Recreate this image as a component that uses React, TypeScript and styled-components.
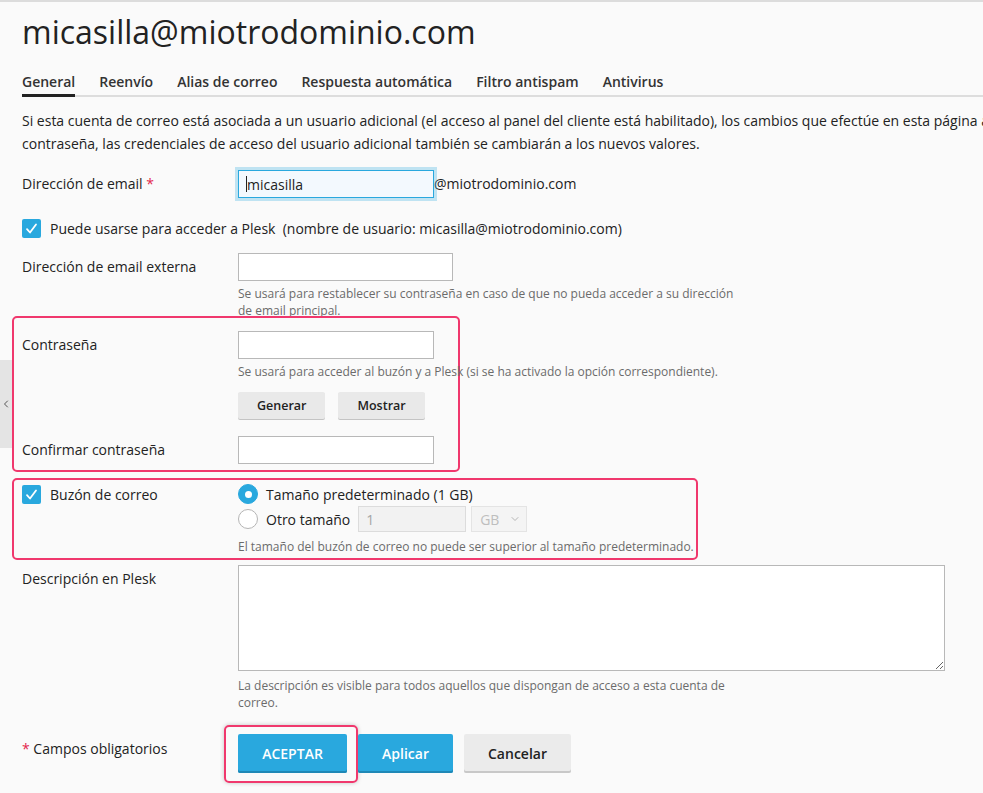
import React from 'react';
import styled, { createGlobalStyle } from 'styled-components';
import { ChevronDown, ChevronLeft } from 'lucide-react';

const GlobalStyle = createGlobalStyle`
  html, body {
    margin: 0;
    padding: 0;
  }
  body {
    background: #fafafa;
    color: #222;
    font-family: 'Open Sans', 'Liberation Sans', sans-serif;
    overflow: hidden;
  }
`;

const ACCENT = '#29a8de';
const MARK = '#f0386d';

const Page = styled.div`
  position: relative;
  min-height: 791px;
  border-top: 2px solid #dcdcdc;
  overflow: hidden;
`;

const Content = styled.div`
  width: 1160px;
  padding-left: 22px;
`;

const Title = styled.h1`
  margin: 10px 0 0;
  font-size: 32px;
  font-weight: 400;
  line-height: 40px;
  color: #222;
`;

const TabList = styled.nav`
  display: flex;
  gap: 24px;
  margin-top: 20px;
  border-bottom: 2px solid #dddddd;
`;

const Tab = styled.a<{ $active?: boolean }>`
  margin-bottom: -2px;
  padding-bottom: 2px;
  border-bottom: 3px solid ${({ $active }) => ($active ? '#222' : 'transparent')};
  font-size: 14px;
  font-weight: 600;
  line-height: 20px;
  color: #333;
  cursor: pointer;
`;

const Intro = styled.p`
  margin: 12px 0 0;
  font-size: 14px;
  line-height: 23px;
  white-space: nowrap;
`;

const FieldRow = styled.div<{ $top?: number; $bottom?: number }>`
  display: grid;
  grid-template-columns: 216px 1fr;
  align-items: start;
  margin-top: ${({ $top = 0 }) => $top}px;
  padding-bottom: ${({ $bottom = 0 }) => $bottom}px;
`;

const Label = styled.label<{ $height?: number }>`
  font-size: 14px;
  line-height: ${({ $height = 28 }) => $height}px;
  color: #222;
`;

const Required = styled.span`
  color: #e3264c;
`;

const Field = styled.div`
  display: flex;
  flex-direction: column;
  align-items: flex-start;
`;

const Inline = styled.div`
  display: flex;
  align-items: center;
`;

const TextInput = styled.input<{ $width: number }>`
  box-sizing: border-box;
  width: ${({ $width }) => $width}px;
  height: 28px;
  padding: 0 8px;
  border: 1px solid #b8b8b8;
  border-radius: 0;
  background: #fff;
  font-family: inherit;
  font-size: 14px;
  color: #222;
  outline: none;
`;

const FocusWrap = styled.div`
  position: relative;
`;

const FocusedInput = styled(TextInput)`
  border-color: ${ACCENT};
  background: #f3f9fe;
  box-shadow: 0 0 0 3px rgba(41, 168, 222, 0.28);
`;

const Caret = styled.span`
  position: absolute;
  left: 8px;
  top: 6px;
  width: 1px;
  height: 16px;
  background: #222;
`;

const Domain = styled.span`
  font-size: 14px;
  line-height: 28px;
`;

const Hint = styled.div<{ $top?: number; $nowrap?: boolean }>`
  max-width: 500px;
  margin-top: ${({ $top = 4 }) => $top}px;
  font-size: 12px;
  line-height: 17px;
  color: #6b6b6b;
  white-space: ${({ $nowrap }) => ($nowrap ? 'nowrap' : 'normal')};
`;

const CheckRow = styled.div<{ $top?: number; $height?: number }>`
  display: flex;
  align-items: center;
  gap: 9px;
  height: ${({ $height = 28 }) => $height}px;
  margin-top: ${({ $top = 0 }) => $top}px;
  font-size: 14px;
`;

const CheckBox = styled.span`
  display: inline-flex;
  align-items: center;
  justify-content: center;
  flex: none;
  width: 19px;
  height: 19px;
  border-radius: 2px;
  background: ${ACCENT};
`;

const Highlight = styled.div<{ $width: number; $top?: number }>`
  box-sizing: border-box;
  width: ${({ $width }) => $width}px;
  margin: ${({ $top = 0 }) => $top}px 0 0 -10px;
  padding: 0 0 0 8px;
  border: 2px solid ${MARK};
  border-radius: 5px;
  position: relative;
`;

const SmallButtons = styled.div`
  display: flex;
  gap: 13px;
  margin-top: 12px;
`;

const SmallButton = styled.button`
  height: 27px;
  padding: 0 19px;
  border: none;
  border-radius: 2px;
  background: #e9e9e9;
  box-shadow: 0 1px 0 #c4c4c4;
  font-family: inherit;
  font-size: 12.5px;
  font-weight: 600;
  color: #222;
`;

const RadioLine = styled.div<{ $height: number }>`
  display: flex;
  align-items: center;
  height: ${({ $height }) => $height}px;
  font-size: 14px;
  color: #222;
`;

const Radio = styled.span<{ $checked?: boolean }>`
  box-sizing: border-box;
  display: inline-flex;
  align-items: center;
  justify-content: center;
  flex: none;
  width: 20px;
  height: 20px;
  margin-right: 8px;
  border-radius: 50%;
  border: 1px solid ${({ $checked }) => ($checked ? ACCENT : '#b5b5b5')};
  background: ${({ $checked }) => ($checked ? ACCENT : '#fff')};

  &::after {
    content: '';
    display: ${({ $checked }) => ($checked ? 'block' : 'none')};
    width: 7px;
    height: 7px;
    border-radius: 50%;
    background: #fff;
  }
`;

const DisabledInput = styled.input`
  box-sizing: border-box;
  width: 108px;
  height: 26px;
  margin-left: 8px;
  padding: 0 7px;
  border: 1px solid #dcdcdc;
  background: #f2f2f2;
  font-family: inherit;
  font-size: 14px;
  color: #a5a5a5;
`;

const SelectWrap = styled.div`
  position: relative;
  margin-left: 5px;
`;

const DisabledSelect = styled.select`
  box-sizing: border-box;
  width: 56px;
  height: 26px;
  padding: 0 0 0 8px;
  border: 1px solid #dcdcdc;
  background: #f2f2f2;
  font-family: inherit;
  font-size: 14px;
  color: #a5a5a5;
  appearance: none;
`;

const SelectArrow = styled.span`
  position: absolute;
  right: 6px;
  top: 7px;
  color: #a5a5a5;
  pointer-events: none;
  display: flex;
`;

const TextArea = styled.textarea`
  box-sizing: border-box;
  width: 707px;
  height: 106px;
  border: 1px solid #b8b8b8;
  background: #fff;
  font-family: inherit;
  font-size: 14px;
`;

const Footer = styled.div`
  display: grid;
  grid-template-columns: 216px 1fr;
  align-items: start;
  margin-top: 23px;
`;

const FooterNote = styled.div`
  padding-top: 1px;
  font-size: 14px;
  line-height: 28px;
`;

const Actions = styled.div`
  display: flex;
  align-items: center;
  gap: 11px;
`;

const Mark = styled.div`
  margin: -9px -11px -10px -14px;
  padding: 7px 9px 8px 12px;
  border: 2px solid ${MARK};
  border-radius: 5px;
  box-shadow: 0 0 4px rgba(0, 0, 0, 0.22);
`;

const ActionButton = styled.button<{ $primary?: boolean; $width: number }>`
  display: block;
  box-sizing: border-box;
  width: ${({ $width }) => $width}px;
  height: 39px;
  border: none;
  border-radius: 2px;
  background: ${({ $primary }) => ($primary ? ACCENT : '#ebebeb')};
  box-shadow: inset 0 -2px 0 ${({ $primary }) => ($primary ? '#1f88b6' : '#c8c8c8')};
  font-family: inherit;
  font-size: 14px;
  font-weight: 600;
  color: ${({ $primary }) => ($primary ? '#fff' : '#222')};
`;

const SideToggle = styled.div`
  position: absolute;
  left: 0;
  top: 358px;
  width: 12px;
  height: 88px;
  display: flex;
  align-items: center;
  justify-content: center;
  background: #e4e4e4;
  color: #444;
`;

const Tick = () => (
  <svg width="13" height="13" viewBox="0 0 13 13" fill="none">
    <path d="M2 7.2L5 10.5L11 2.5" stroke="#fff" strokeWidth="1.8" strokeLinecap="round" strokeLinejoin="round" />
  </svg>
);

const tabs = ['General', 'Reenvío', 'Alias de correo', 'Respuesta automática', 'Filtro antispam', 'Antivirus'];

export default function App() {
  return (
    <>
      <GlobalStyle />
      <Page>
        <SideToggle>
          <ChevronLeft size={12} strokeWidth={1.8} />
        </SideToggle>
        <Content>
          <Title>micasilla@miotrodominio.com</Title>

          <TabList>
            {tabs.map((t, i) => (
              <Tab key={t} $active={i === 0}>
                {t}
              </Tab>
            ))}
          </TabList>

          <Intro>
            Si esta cuenta de correo está asociada a un usuario adicional (el acceso al panel del cliente está
            habilitado), los cambios que efectúe en esta página afectarán también al usuario adicional. Si cambia la
            <br />
            contraseña, las credenciales de acceso del usuario adicional también se cambiarán a los nuevos valores.
          </Intro>

          <FieldRow $top={15}>
            <Label>
              Dirección de email <Required>*</Required>
            </Label>
            <Inline>
              <FocusWrap>
                <FocusedInput $width={196} defaultValue="micasilla" readOnly />
                <Caret />
              </FocusWrap>
              <Domain>@miotrodominio.com</Domain>
            </Inline>
          </FieldRow>

          <CheckRow $top={16}>
            <CheckBox>
              <Tick />
            </CheckBox>
            Puede usarse para acceder a Plesk&nbsp; (nombre de usuario: micasilla@miotrodominio.com)
          </CheckRow>

          <FieldRow $top={11}>
            <Label>Dirección de email externa</Label>
            <Field>
              <TextInput $width={215} />
              <Hint>
                Se usará para restablecer su contraseña en caso de que no pueda acceder a su dirección de email
                principal.
              </Hint>
            </Field>
          </FieldRow>

          <Highlight $width={448} $top={-3}>
            <FieldRow $top={13}>
              <Label>Contraseña</Label>
              <Field>
                <TextInput $width={196} type="password" />
                <Hint $nowrap>Se usará para acceder al buzón y a Plesk (si se ha activado la opción correspondiente).</Hint>
                <SmallButtons>
                  <SmallButton>Generar</SmallButton>
                  <SmallButton>Mostrar</SmallButton>
                </SmallButtons>
              </Field>
            </FieldRow>
            <FieldRow $top={17} $bottom={6}>
              <Label>Confirmar contraseña</Label>
              <TextInput $width={196} type="password" />
            </FieldRow>
          </Highlight>

          <Highlight $width={686} $top={6}>
            <FieldRow $top={2} $bottom={3}>
              <CheckRow $height={24}>
                <CheckBox>
                  <Tick />
                </CheckBox>
                Buzón de correo
              </CheckRow>
              <Field>
                <RadioLine $height={24}>
                  <Radio $checked />
                  Tamaño predeterminado (1 GB)
                </RadioLine>
                <RadioLine $height={26}>
                  <Radio />
                  Otro tamaño
                  <DisabledInput defaultValue="1" disabled />
                  <SelectWrap>
                    <DisabledSelect disabled defaultValue="GB">
                      <option>GB</option>
                    </DisabledSelect>
                    <SelectArrow>
                      <ChevronDown size={12} strokeWidth={1.6} />
                    </SelectArrow>
                  </SelectWrap>
                </RadioLine>
                <Hint $top={6} $nowrap>
                  El tamaño del buzón de correo no puede ser superior al tamaño predeterminado.
                </Hint>
              </Field>
            </FieldRow>
          </Highlight>

          <FieldRow $top={5}>
            <Label>Descripción en Plesk</Label>
            <Field>
              <TextArea />
              <Hint $top={6}>
                La descripción es visible para todos aquellos que dispongan de acceso a esta cuenta de correo.
              </Hint>
            </Field>
          </FieldRow>

          <Footer>
            <FooterNote>
              <Required>*</Required> Campos obligatorios
            </FooterNote>
            <Actions>
              <Mark>
                <ActionButton $primary $width={109}>
                  ACEPTAR
                </ActionButton>
              </Mark>
              <ActionButton $primary $width={95}>
                Aplicar
              </ActionButton>
              <ActionButton $width={107}>Cancelar</ActionButton>
            </Actions>
          </Footer>
        </Content>
      </Page>
    </>
  );
}
